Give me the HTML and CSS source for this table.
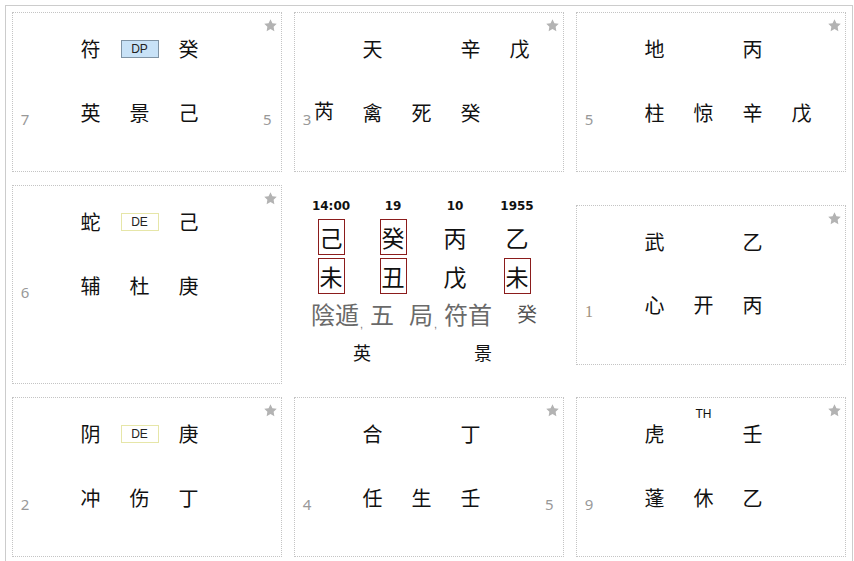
FILE: index.html
```html
<!DOCTYPE html>
<html>
<head>
<meta charset="utf-8">
<link rel="stylesheet" href="styles.css">
</head>
<body>
<div class="board">
  <!-- cell 1 -->
  <div class="cell">
    <svg class="star" viewBox="0 0 24 24"><path d="M12 2l3.09 6.26L22 9.27l-5 4.87 1.18 6.88L12 17.77l-6.18 3.25L7 14.14 2 9.27l6.91-1.01L12 2z"/></svg>
    <div class="row r1"><span class="num"></span><span class="c0"></span><span class="c">符</span><span class="c"><span class="badge dp">DP</span></span><span class="c">癸</span><span class="c"></span><span class="rn"></span></div>
    <div class="row r2"><span class="num">7</span><span class="c0"></span><span class="c">英</span><span class="c">景</span><span class="c">己</span><span class="c"></span><span class="rn">5</span></div>
  </div>
  <!-- cell 2 -->
  <div class="cell">
    <svg class="star" viewBox="0 0 24 24"><path d="M12 2l3.09 6.26L22 9.27l-5 4.87 1.18 6.88L12 17.77l-6.18 3.25L7 14.14 2 9.27l6.91-1.01L12 2z"/></svg>
    <div class="row r1"><span class="num"></span><span class="c0"></span><span class="c">天</span><span class="c"></span><span class="c">辛</span><span class="c">戊</span><span class="rn"></span></div>
    <div class="row r2"><span class="num">3</span><span class="c0">芮</span><span class="c">禽</span><span class="c">死</span><span class="c">癸</span><span class="c"></span><span class="rn"></span></div>
  </div>
  <!-- cell 3 -->
  <div class="cell">
    <svg class="star" viewBox="0 0 24 24"><path d="M12 2l3.09 6.26L22 9.27l-5 4.87 1.18 6.88L12 17.77l-6.18 3.25L7 14.14 2 9.27l6.91-1.01L12 2z"/></svg>
    <div class="row r1"><span class="num"></span><span class="c0"></span><span class="c">地</span><span class="c"></span><span class="c">丙</span><span class="c"></span><span class="rn"></span></div>
    <div class="row r2"><span class="num">5</span><span class="c0"></span><span class="c">柱</span><span class="c">惊</span><span class="c">辛</span><span class="c">戊</span><span class="rn"></span></div>
  </div>

  <!-- cell 4 -->
  <div class="cell">
    <svg class="star" viewBox="0 0 24 24"><path d="M12 2l3.09 6.26L22 9.27l-5 4.87 1.18 6.88L12 17.77l-6.18 3.25L7 14.14 2 9.27l6.91-1.01L12 2z"/></svg>
    <div class="row r1"><span class="num"></span><span class="c0"></span><span class="c">蛇</span><span class="c"><span class="badge de">DE</span></span><span class="c">己</span><span class="c"></span><span class="rn"></span></div>
    <div class="row r2"><span class="num">6</span><span class="c0"></span><span class="c">辅</span><span class="c">杜</span><span class="c">庚</span><span class="c"></span><span class="rn"></span></div>
  </div>
  <!-- center -->
  <div class="center">
    <div class="cols hdr"><span>14:00</span><span>19</span><span>10</span><span>1955</span></div>
    <div class="cols pil"><span class="bx">己</span><span class="bx">癸</span><span>丙</span><span>乙</span></div>
    <div class="cols pil p2"><span class="bx">未</span><span class="bx">丑</span><span>戊</span><span class="bx">未</span></div>
    <div class="ju"><span class="jw">陰遁</span><span class="cm">,</span><span class="jw">五</span><span class="jw j3">局</span><span class="cm">,</span><span class="jw">符首</span><span class="gui">癸</span></div>
    <div class="zs"><span>英</span><span class="z2">景</span></div>
  </div>
  <!-- cell 6 -->
  <div class="cell mid">
    <svg class="star" viewBox="0 0 24 24"><path d="M12 2l3.09 6.26L22 9.27l-5 4.87 1.18 6.88L12 17.77l-6.18 3.25L7 14.14 2 9.27l6.91-1.01L12 2z"/></svg>
    <div class="row r1"><span class="num"></span><span class="c0"></span><span class="c">武</span><span class="c"></span><span class="c">乙</span><span class="c"></span><span class="rn"></span></div>
    <div class="row r2"><span class="num serif">1</span><span class="c0"></span><span class="c">心</span><span class="c">开</span><span class="c">丙</span><span class="c"></span><span class="rn"></span></div>
  </div>

  <!-- cell 7 -->
  <div class="cell">
    <svg class="star" viewBox="0 0 24 24"><path d="M12 2l3.09 6.26L22 9.27l-5 4.87 1.18 6.88L12 17.77l-6.18 3.25L7 14.14 2 9.27l6.91-1.01L12 2z"/></svg>
    <div class="row r1"><span class="num"></span><span class="c0"></span><span class="c">阴</span><span class="c"><span class="badge de">DE</span></span><span class="c">庚</span><span class="c"></span><span class="rn"></span></div>
    <div class="row r2"><span class="num">2</span><span class="c0"></span><span class="c">冲</span><span class="c">伤</span><span class="c">丁</span><span class="c"></span><span class="rn"></span></div>
  </div>
  <!-- cell 8 -->
  <div class="cell">
    <svg class="star" viewBox="0 0 24 24"><path d="M12 2l3.09 6.26L22 9.27l-5 4.87 1.18 6.88L12 17.77l-6.18 3.25L7 14.14 2 9.27l6.91-1.01L12 2z"/></svg>
    <div class="row r1"><span class="num"></span><span class="c0"></span><span class="c">合</span><span class="c"></span><span class="c">丁</span><span class="c"></span><span class="rn"></span></div>
    <div class="row r2"><span class="num">4</span><span class="c0"></span><span class="c">任</span><span class="c">生</span><span class="c">壬</span><span class="c"></span><span class="rn">5</span></div>
  </div>
  <!-- cell 9 -->
  <div class="cell">
    <svg class="star" viewBox="0 0 24 24"><path d="M12 2l3.09 6.26L22 9.27l-5 4.87 1.18 6.88L12 17.77l-6.18 3.25L7 14.14 2 9.27l6.91-1.01L12 2z"/></svg>
    <div class="row r1"><span class="num"></span><span class="c0"></span><span class="c">虎</span><span class="c"><span class="th">TH</span></span><span class="c">壬</span><span class="c"></span><span class="rn"></span></div>
    <div class="row r2"><span class="num">9</span><span class="c0"></span><span class="c">蓬</span><span class="c">休</span><span class="c">乙</span><span class="c"></span><span class="rn"></span></div>
  </div>
</div>
</body>
</html>
```

FILE: styles.css
```css
* { box-sizing: border-box; }

body {
  margin: 0;
  background: #ffffff;
  font-family: "Noto Sans CJK SC", "Noto Sans", sans-serif;
  color: #111;
}

.board {
  margin: 5px 0 0 5px;
  width: 848px;
  height: 556px;
  border: 1px solid #cccccc;
  border-bottom: none;
  padding: 6px 6px 0 6px;
  display: grid;
  grid-template-columns: 270px 270px 270px;
  grid-template-rows: 160px 199px 160px;
  column-gap: 12px;
  row-gap: 13px;
  align-content: start;
}

.cell {
  position: relative;
  border: 1px dotted #c4c4c4;
  padding-top: 24px;
  display: flex;
  flex-direction: column;
  row-gap: 38px;
}

.cell.mid {
  align-self: center;
  height: 160px;
}

.star {
  position: absolute;
  top: 5px;
  right: 3px;
  width: 15px;
  height: 15px;
  fill: #b3b3b3;
}

.row {
  display: grid;
  grid-template-columns: 14px 34px 49px 49px 49px 49px 1fr;
  padding-left: 5px;
  height: 24px;
  font-size: 20px;
  line-height: 24px;
}

.row .c {
  text-align: center;
  display: flex;
  justify-content: center;
  align-items: center;
}

.row .c0 {
  text-align: left;
}

.num, .rn {
  font-family: "Noto Sans", sans-serif;
  font-size: 15px;
  line-height: 14px;
  color: #999;
  margin-top: 13px;
}

.num { text-align: center; }
.rn { text-align: left; padding-left: 1px; }

.num.serif {
  font-family: "Liberation Serif", serif;
  font-size: 16px;
  color: #a09080;
}

.badge {
  display: inline-flex;
  align-items: center;
  justify-content: center;
  width: 38px;
  height: 18px;
  font-family: "Liberation Sans", Arial, sans-serif;
  font-size: 12px;
  line-height: 1;
  color: #222;
}

.badge.dp {
  background: #c8e2f7;
  border: 1px solid #7f93a4;
}

.badge.de {
  background: #ffffff;
  border: 1px solid #e6e6a8;
}

.th {
  align-self: flex-start;
  margin-top: -14px;
  font-family: "Liberation Sans", Arial, sans-serif;
  font-size: 12px;
  line-height: 12px;
  color: #111;
}

/* center */
.center {
  padding-top: 14px;
  display: flex;
  flex-direction: column;
}

.cols {
  display: grid;
  grid-template-columns: repeat(4, 62px);
  padding-left: 6px;
  justify-items: center;
}

.hdr {
  font-family: "DejaVu Sans", Verdana, sans-serif;
  font-weight: bold;
  font-size: 12px;
  line-height: 14px;
  color: #111;
}

.pil {
  margin-top: 6px;
  height: 36px;
  font-size: 23px;
  line-height: 36px;
}

.pil.p2 { margin-top: 3px; }

.pil span {
  width: 27px;
  height: 36px;
  text-align: center;
  display: flex;
  align-items: center;
  justify-content: center;
}

.pil .bx {
  border: 1px solid #8b1c1c;
}

.ju {
  margin-top: 6px;
  display: flex;
  align-items: flex-start;
  padding-left: 17px;
  height: 28px;
  font-size: 24px;
  line-height: 28px;
  color: #6a6a6a;
}

.ju .cm {
  width: 11px;
  font-family: "Liberation Sans", sans-serif;
  font-size: 11px;
  line-height: 11px;
  padding-top: 19px;
  padding-left: 1px;
  color: #777;
}

.ju .j3 { margin-left: 15px; }

.ju .gui {
  margin-left: 25px;
  font-size: 20px;
  color: #555;
}

.zs {
  margin-top: 13px;
  display: flex;
  padding-left: 59px;
  font-size: 18px;
  line-height: 22px;
  color: #111;
}

.zs .z2 { margin-left: 103px; }
```
